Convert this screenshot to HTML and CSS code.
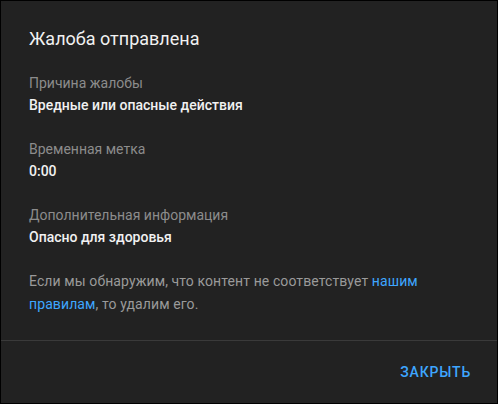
FILE: index.html
```html
<!DOCTYPE html>
<html lang="ru">
<head>
<meta charset="utf-8">
<link rel="stylesheet" href="styles.css">
</head>
<body>
<div class="dialog">
  <div class="content">
    <h1 class="title">Жалоба отправлена</h1>
    <div class="field">
      <div class="label">Причина жалобы</div>
      <div class="value">Вредные или опасные действия</div>
    </div>
    <div class="field">
      <div class="label">Временная метка</div>
      <div class="value">0:00</div>
    </div>
    <div class="field">
      <div class="label">Дополнительная информация</div>
      <div class="value">Опасно для здоровья</div>
    </div>
    <p class="note">Если мы обнаружим, что контент не соответствует <a class="link" href="#">нашим правилам</a>, то удалим его.</p>
  </div>
  <div class="footer">
    <button class="close">ЗАКРЫТЬ</button>
  </div>
</div>
</body>
</html>
```
FILE: styles.css
```css
html, body {
  margin: 0;
  padding: 0;
  background: #000;
}
body {
  font-family: Roboto, "Noto Sans", Arial, sans-serif;
  width: 498px;
  height: 404px;
  overflow: hidden;
}
.dialog {
  box-sizing: border-box;
  width: 496px;
  height: 402px;
  margin: 1px;
  background: #222222;
  display: flex;
  flex-direction: column;
}
.content {
  padding: 24px 28px 0 28px;
  flex: 1;
}
.title {
  margin: 0 0 19px 0;
  font-size: 18px;
  line-height: 28px;
  font-weight: 400;
  color: #f1f1f1;
}
.field {
  margin-bottom: 22px;
}
.label {
  font-size: 14px;
  line-height: 22px;
  color: #8c8c8c;
}
.value {
  font-size: 14px;
  line-height: 22px;
  font-weight: 500;
  color: #f1f1f1;
}
.note {
  margin: 0;
  font-size: 14px;
  line-height: 23px;
  letter-spacing: 0.1px;
  color: #9a9a9a;
}
.link {
  color: #3ea6ff;
  text-decoration: none;
}
.footer {
  border-top: 1px solid #3a3a3a;
  height: 62px;
  display: flex;
  justify-content: flex-end;
  align-items: center;
  padding-right: 26px;
}
.close {
  background: none;
  border: none;
  padding: 0;
  font-family: inherit;
  font-size: 14px;
  font-weight: 500;
  letter-spacing: 0.8px;
  color: #3ea6ff;
}
```
